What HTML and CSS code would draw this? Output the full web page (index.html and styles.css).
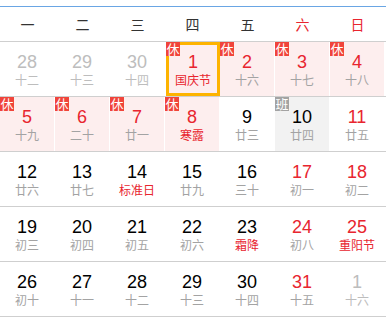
FILE: index.html
```html
<!DOCTYPE html>
<html lang="zh-CN">
<head>
<meta charset="utf-8">
<title>日历</title>
<link rel="stylesheet" href="styles.css">
</head>
<body>
<div class="cal">
  <div class="head">
    <div>一</div><div>二</div><div>三</div><div>四</div><div>五</div><div class="we">六</div><div class="we">日</div>
  </div>
  <div class="week">
    <div class="cell other"><span class="num">28</span><span class="lun">十二</span></div>
    <div class="cell other"><span class="num">29</span><span class="lun">十三</span></div>
    <div class="cell other"><span class="num">30</span><span class="lun">十四</span></div>
    <div class="cell rest today"><i class="badge">休</i><span class="num">1</span><span class="lun fest">国庆节</span></div>
    <div class="cell rest"><i class="badge">休</i><span class="num">2</span><span class="lun">十六</span></div>
    <div class="cell rest"><i class="badge">休</i><span class="num">3</span><span class="lun">十七</span></div>
    <div class="cell rest"><i class="badge">休</i><span class="num">4</span><span class="lun">十八</span></div>
  </div>
  <div class="week">
    <div class="cell rest"><i class="badge">休</i><span class="num">5</span><span class="lun">十九</span></div>
    <div class="cell rest"><i class="badge">休</i><span class="num">6</span><span class="lun">二十</span></div>
    <div class="cell rest"><i class="badge">休</i><span class="num">7</span><span class="lun">廿一</span></div>
    <div class="cell rest"><i class="badge">休</i><span class="num">8</span><span class="lun fest">寒露</span></div>
    <div class="cell"><span class="num">9</span><span class="lun">廿三</span></div>
    <div class="cell work"><i class="badge gray">班</i><span class="num">10</span><span class="lun">廿四</span></div>
    <div class="cell red"><span class="num">11</span><span class="lun">廿五</span></div>
  </div>
  <div class="week">
    <div class="cell"><span class="num">12</span><span class="lun">廿六</span></div>
    <div class="cell"><span class="num">13</span><span class="lun">廿七</span></div>
    <div class="cell"><span class="num">14</span><span class="lun fest">标准日</span></div>
    <div class="cell"><span class="num">15</span><span class="lun">廿九</span></div>
    <div class="cell"><span class="num">16</span><span class="lun">三十</span></div>
    <div class="cell red"><span class="num">17</span><span class="lun">初一</span></div>
    <div class="cell red"><span class="num">18</span><span class="lun">初二</span></div>
  </div>
  <div class="week">
    <div class="cell"><span class="num">19</span><span class="lun">初三</span></div>
    <div class="cell"><span class="num">20</span><span class="lun">初四</span></div>
    <div class="cell"><span class="num">21</span><span class="lun">初五</span></div>
    <div class="cell"><span class="num">22</span><span class="lun">初六</span></div>
    <div class="cell"><span class="num">23</span><span class="lun fest">霜降</span></div>
    <div class="cell red"><span class="num">24</span><span class="lun">初八</span></div>
    <div class="cell red"><span class="num">25</span><span class="lun fest">重阳节</span></div>
  </div>
  <div class="week">
    <div class="cell"><span class="num">26</span><span class="lun">初十</span></div>
    <div class="cell"><span class="num">27</span><span class="lun">十一</span></div>
    <div class="cell"><span class="num">28</span><span class="lun">十二</span></div>
    <div class="cell"><span class="num">29</span><span class="lun">十三</span></div>
    <div class="cell"><span class="num">30</span><span class="lun">十四</span></div>
    <div class="cell red"><span class="num">31</span><span class="lun">十五</span></div>
    <div class="cell other"><span class="num">1</span><span class="lun">十六</span></div>
  </div>
</div>
</body>
</html>
```
FILE: styles.css
```css
html, body {
  margin: 0;
  padding: 0;
  background: #fff;
}
body {
  font-family: "Liberation Sans", Arial, "Noto Sans CJK SC", sans-serif;
}
.cal {
  width: 386px;
  margin-top: 6px;
  border-top: 1px solid #6aa6e4;
}
.head {
  display: grid;
  grid-template-columns: repeat(7, 55px);
  height: 34px;
  align-items: center;
  border-bottom: 1px solid #cfcfcf;
  font-family: "Noto Sans CJK SC", sans-serif;
  font-size: 14px;
  color: #333;
}
.head div {
  text-align: center;
  line-height: 34px;
}
.head .we {
  color: #e8252f;
}
.week {
  display: grid;
  grid-template-columns: repeat(7, 54px);
  column-gap: 1px;
  height: 54px;
  border-bottom: 1px solid #cfcfcf;
}
.cell {
  position: relative;
  display: flex;
  flex-direction: column;
  align-items: center;
  box-sizing: border-box;
}
.num {
  margin-top: 10px;
  font-size: 18px;
  line-height: 20px;
  color: #000;
}
.lun {
  font-family: "Noto Sans CJK SC", sans-serif;
  font-size: 12px;
  line-height: 16px;
  color: #a3a3a3;
}
.lun.fest {
  color: #e8252f;
}
.rest {
  background: #fdeeee;
}
.rest .num,
.red .num {
  color: #e8252f;
}
.work {
  background: #f2f2f2;
}
.other .num,
.other .lun {
  color: #bdbdbd;
}
.today {
  border: 3px solid #fdb300;
  margin-left: 1px;
  margin-right: -1px;
}
.today .num {
  margin-top: 7px;
}
.badge {
  position: absolute;
  left: 0;
  top: 0;
  width: 14px;
  height: 14px;
  display: flex;
  align-items: center;
  justify-content: center;
  background: #f0443a;
  color: #fff;
  font-style: normal;
  font-family: "Noto Sans CJK SC", sans-serif;
  font-size: 13px;
  line-height: 14px;
}
.today .badge {
  left: -3px;
  top: -3px;
}
.badge.gray {
  background: #a3a3a3;
}
```
